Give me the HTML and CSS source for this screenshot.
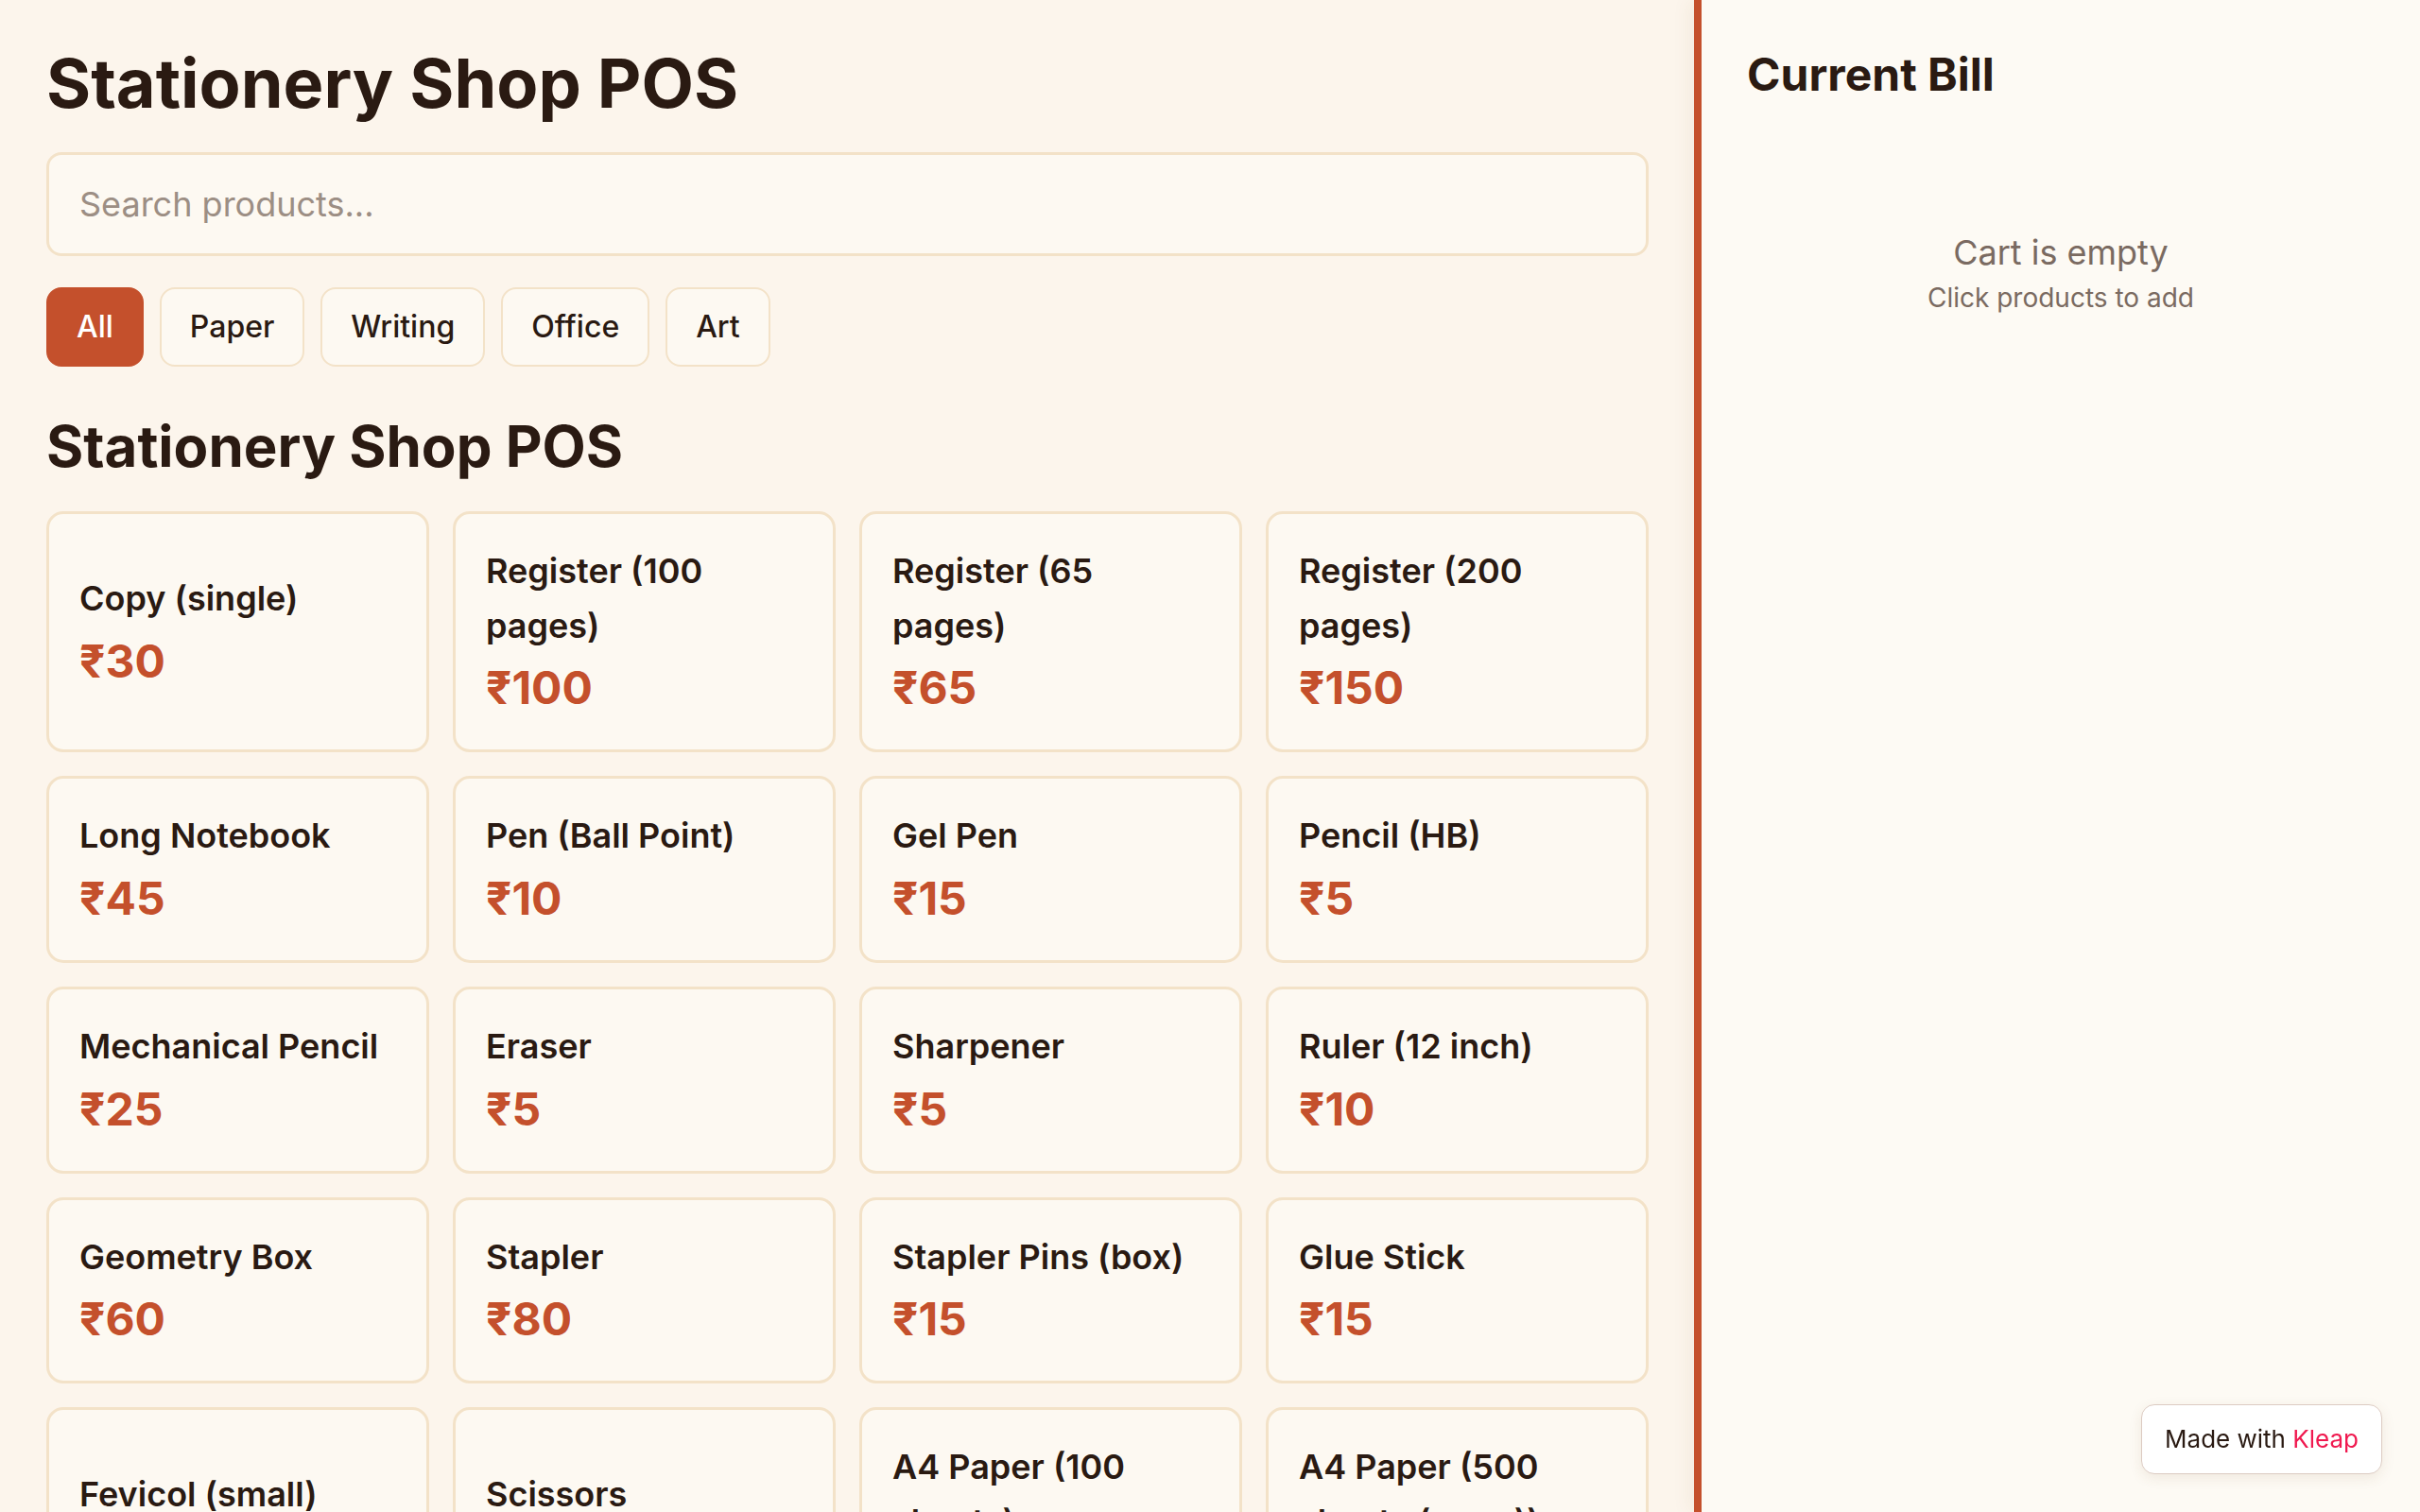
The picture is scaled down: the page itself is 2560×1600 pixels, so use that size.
FILE: index.html
```html
<!DOCTYPE html>
<html lang="en">
<head>
<meta charset="utf-8">
<meta name="viewport" content="width=device-width, initial-scale=1">
<title>Stationery Shop POS</title>
<link rel="stylesheet" href="styles.css">
</head>
<body>
<div class="pos">
	<main class="shop">
		<h1 class="shop-title">Stationery Shop POS</h1>
		<input class="search" type="text" placeholder="Search products...">
		<div class="tabs">
			<button class="tab active">All</button>
			<button class="tab">Paper</button>
			<button class="tab">Writing</button>
			<button class="tab">Office</button>
			<button class="tab">Art</button>
		</div>
		<h2 class="section-title">Stationery Shop POS</h2>
		<div class="products">
			<div class="product"><div class="name">Copy (single)</div><div class="price">₹30</div></div>
			<div class="product"><div class="name">Register (100 pages)</div><div class="price">₹100</div></div>
			<div class="product"><div class="name">Register (65 pages)</div><div class="price">₹65</div></div>
			<div class="product"><div class="name">Register (200 pages)</div><div class="price">₹150</div></div>

			<div class="product"><div class="name">Long Notebook</div><div class="price">₹45</div></div>
			<div class="product"><div class="name">Pen (Ball Point)</div><div class="price">₹10</div></div>
			<div class="product"><div class="name">Gel Pen</div><div class="price">₹15</div></div>
			<div class="product"><div class="name">Pencil (HB)</div><div class="price">₹5</div></div>

			<div class="product"><div class="name">Mechanical Pencil</div><div class="price">₹25</div></div>
			<div class="product"><div class="name">Eraser</div><div class="price">₹5</div></div>
			<div class="product"><div class="name">Sharpener</div><div class="price">₹5</div></div>
			<div class="product"><div class="name">Ruler (12 inch)</div><div class="price">₹10</div></div>

			<div class="product"><div class="name">Geometry Box</div><div class="price">₹60</div></div>
			<div class="product"><div class="name">Stapler</div><div class="price">₹80</div></div>
			<div class="product"><div class="name">Stapler Pins (box)</div><div class="price">₹15</div></div>
			<div class="product"><div class="name">Glue Stick</div><div class="price">₹15</div></div>

			<div class="product"><div class="name">Fevicol (small)</div><div class="price">₹20</div></div>
			<div class="product"><div class="name">Scissors</div><div class="price">₹40</div></div>
			<div class="product"><div class="name">A4 Paper (100 sheets)</div><div class="price">₹80</div></div>
			<div class="product"><div class="name">A4 Paper (500 sheets (ream))</div><div class="price">₹350</div></div>
		</div>
	</main>

	<aside class="bill">
		<h2 class="bill-title">Current Bill</h2>
		<div class="empty">
			<p class="empty-main">Cart is empty</p>
			<p class="empty-sub">Click products to add</p>
		</div>
	</aside>
</div>

<a class="made-with" href="#">Made with <span class="brand">Kleap</span></a>
</body>
</html>
```

FILE: styles.css
```css
* {
  box-sizing: border-box;
}

html, body {
  margin: 0;
  height: 100%;
}

body {
  font-family: Inter, "Noto Sans", sans-serif;
  color: #2a1a12;
  background: #fcf5ec;
  overflow: hidden;
}

.pos {
  display: flex;
  height: 100vh;
}

.shop {
  flex: 1;
  padding: 48px 48px 48px 49px;
  overflow-y: auto;
  scrollbar-width: none;
}

.shop-title {
  margin: 0 0 34px;
  font-size: 72px;
  font-weight: 700;
  line-height: 1.1;
}

.search {
  display: block;
  width: 100%;
  padding: 30px 32px;
  font-family: inherit;
  font-size: 36px;
  color: #2a1a12;
  background: #fdf9f2;
  border: 3px solid #f3e2c8;
  border-radius: 16px;
  outline: none;
}

.search::placeholder {
  color: #9c8e84;
}

.tabs {
  display: flex;
  gap: 17px;
  margin-top: 33px;
}

.tab {
  padding: 16px 30px;
  font-family: inherit;
  font-size: 32px;
  font-weight: 500;
  line-height: 48px;
  color: #2a1a12;
  background: #fdf9f2;
  border: 2px solid #f3e2c8;
  border-radius: 16px;
}

.tab.active {
  color: #fff;
  background: #c4502c;
  border-color: #c4502c;
}

.section-title {
  margin: 51px 0 36px;
  font-size: 60px;
  font-weight: 700;
  line-height: 1.1;
}

.products {
  display: grid;
  grid-template-columns: repeat(4, 1fr);
  gap: 25px;
}

.product {
  display: flex;
  flex-direction: column;
  justify-content: center;
  padding: 32px;
  background: #fdf9f2;
  border: 3px solid #f3e2c8;
  border-radius: 18px;
}

.name {
  font-size: 36px;
  font-weight: 600;
  line-height: 1.6;
  margin-bottom: 4px;
}

.price {
  font-size: 48px;
  font-weight: 700;
  line-height: 66px;
  color: #c4502c;
}

.bill {
  width: 768px;
  flex-shrink: 0;
  padding: 48px;
  background: #fdfaf4;
  border-left: 8px solid #c4502c;
  box-shadow: -6px 0 18px rgba(120, 80, 40, 0.06);
}

.bill-title {
  margin: 0;
  font-size: 48px;
  font-weight: 700;
  line-height: 1.3;
}

.empty {
  padding-top: 130px;
  text-align: center;
  color: #7a6a61;
}

.empty p {
  margin: 0;
}

.empty-main {
  font-size: 36px;
  line-height: 1.5;
}

.empty-sub {
  font-size: 28px;
  line-height: 1.5;
}

.made-with {
  position: fixed;
  right: 40px;
  bottom: 40px;
  padding: 16px 24px;
  font-size: 26px;
  line-height: 40px;
  color: #2a1a12;
  text-decoration: none;
  background: #fff;
  border: 1px solid #dccbc2;
  border-radius: 14px;
  box-shadow: 0 4px 14px rgba(120, 80, 40, 0.1);
}

.brand {
  color: #f0194f;
}
```
